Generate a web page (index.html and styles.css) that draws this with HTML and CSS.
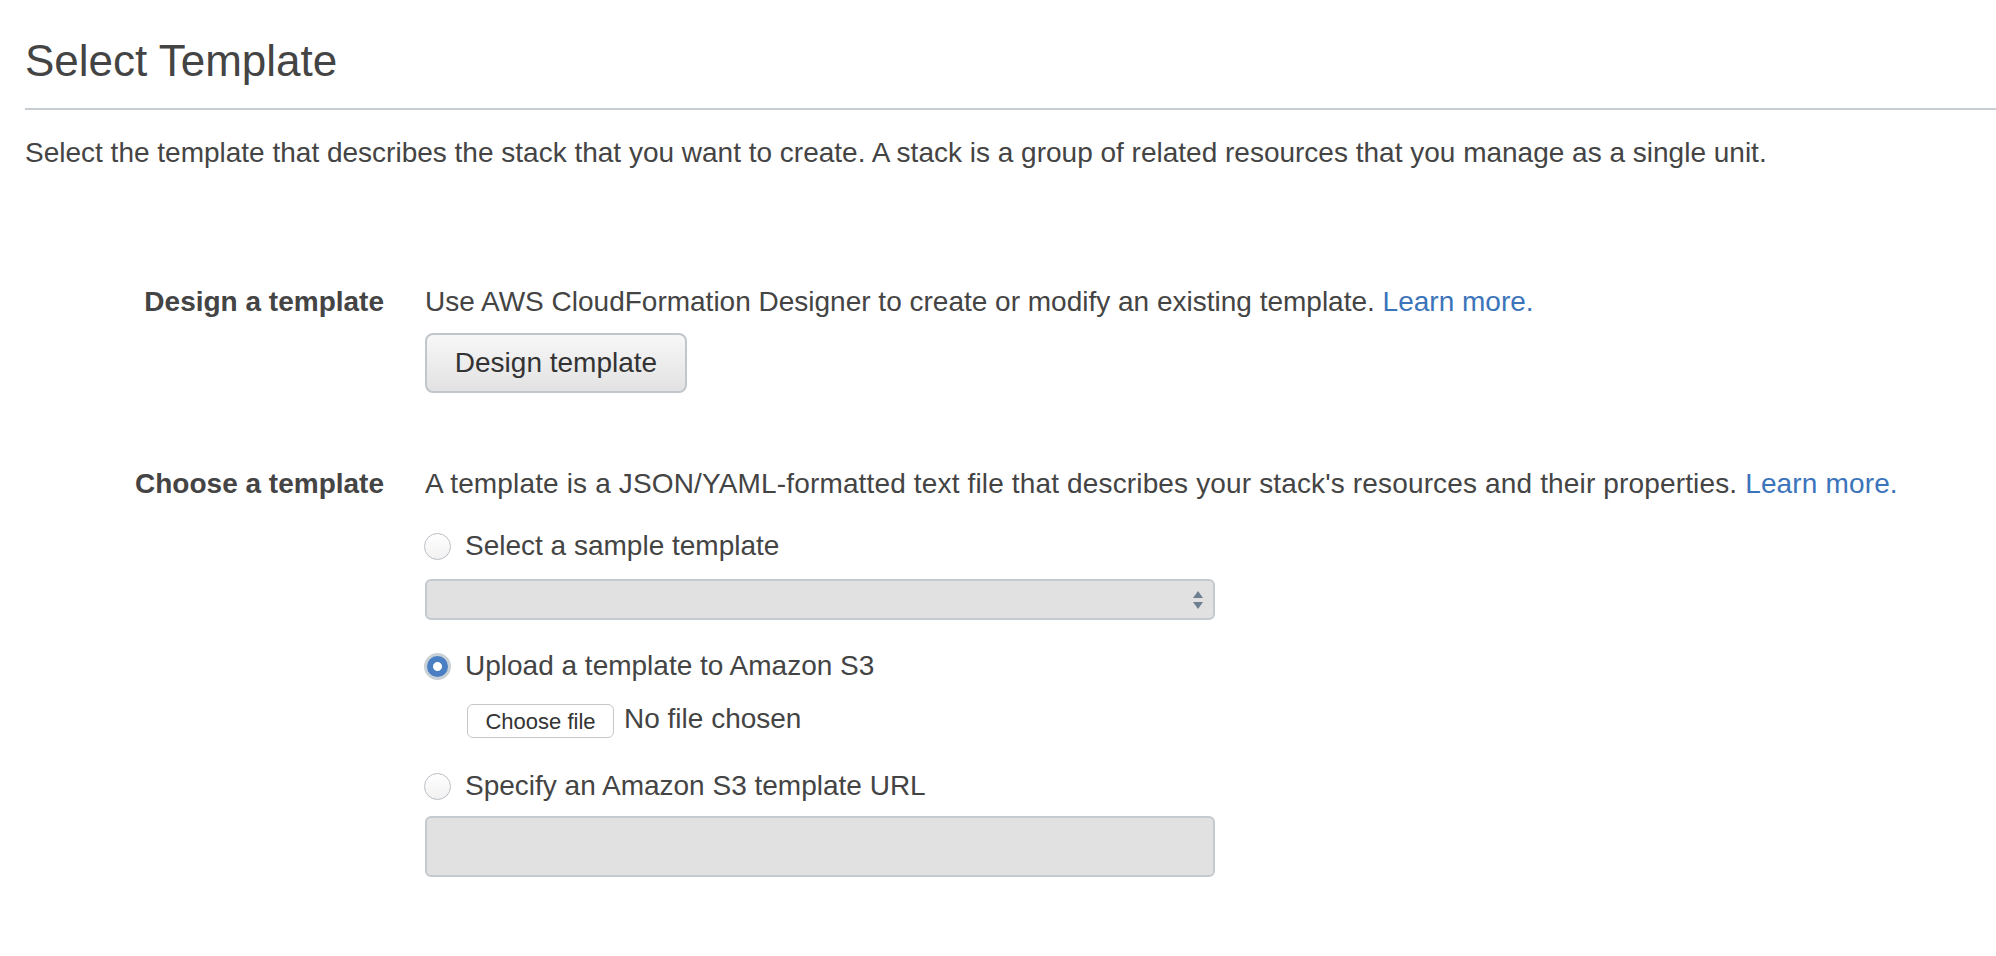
FILE: index.html
```html
<!DOCTYPE html>
<html lang="en">
<head>
<meta charset="utf-8">
<title>Select Template</title>
<link rel="stylesheet" href="styles.css">
</head>
<body>
<div class="page">
  <h1 class="title">Select Template</h1>
  <hr class="divider">
  <p class="intro">Select the template that describes the stack that you want to create. A stack is a group of related resources that you manage as a single unit.</p>

  <div class="form">
    <div class="label label-design">Design a template</div>
    <div class="field">
      <div class="desc">Use AWS CloudFormation Designer to create or modify an existing template. <a class="link" href="#">Learn more.</a></div>
      <button class="btn" type="button">Design template</button>
    </div>

    <div class="label label-choose">Choose a template</div>
    <div class="field field-choose">
      <div class="desc desc-wide">A template is a JSON/YAML-formatted text file that describes your stack's resources and their properties. <a class="link" href="#">Learn more.</a></div>

      <div class="radio-row radio-first"><span class="radio"></span><span class="radio-text">Select a sample template</span></div>
      <div class="select"><span class="arrows"><span class="arr-up"></span><span class="arr-down"></span></span></div>

      <div class="radio-row radio-second"><span class="radio checked"></span><span class="radio-text">Upload a template to Amazon S3</span></div>
      <div class="file-row"><span class="file-btn">Choose file</span><span class="file-name">No file chosen</span></div>

      <div class="radio-row radio-third"><span class="radio"></span><span class="radio-text">Specify an Amazon S3 template URL</span></div>
      <div class="text-input"></div>
    </div>
  </div>
</div>
</body>
</html>
```

FILE: styles.css
```css
html, body {
  margin: 0;
  padding: 0;
  background: #ffffff;
}

body {
  font-family: "Liberation Sans", Arial, Helvetica, sans-serif;
  color: #444444;
  font-size: 28px;
  line-height: 36px;
}

.page {
  padding: 0 0 0 25px;
}

.title {
  margin: 35px 0 21px 0;
  font-size: 44px;
  line-height: 52px;
  font-weight: normal;
  color: #444444;
}

.divider {
  margin: 0;
  border: 0;
  height: 2px;
  background: #c8cdd2;
}

.intro {
  margin: 25px 0 0 0;
}

.form {
  display: grid;
  grid-template-columns: 359px 1fr;
  column-gap: 41px;
  margin-top: 113px;
}

.label {
  text-align: right;
  font-weight: bold;
}

.label-choose {
  margin-top: 73px;
}

.field {
  display: flex;
  flex-direction: column;
  align-items: flex-start;
}

.field-choose {
  margin-top: 73px;
}

.desc-wide {
  letter-spacing: 0.15px;
}

.link {
  color: #3b74ba;
  text-decoration: none;
}

.btn {
  margin-top: 13px;
  width: 262px;
  height: 60px;
  border: 2px solid #c0c6cb;
  border-radius: 8px;
  background: linear-gradient(#f7f7f7 0%, #eeeeee 45%, #e2e2e2 100%);
  font-family: inherit;
  font-size: 28px;
  color: #333333;
  padding: 0;
}

.radio-row {
  display: flex;
  align-items: center;
  height: 36px;
}

.radio-first { margin-top: 26px; }
.radio-second { margin-top: 28px; }
.radio-third { margin-top: 30px; }

.radio {
  box-sizing: border-box;
  width: 27px;
  height: 27px;
  border-radius: 50%;
  border: 1.5px solid #b9bfc5;
  background: linear-gradient(#ffffff, #f1f1f1);
  margin-right: 14px;
  margin-left: -1px;
  flex: none;
}

.radio.checked {
  border: 3px solid #c9d0d6;
  background: radial-gradient(circle, #ffffff 0, #ffffff 4px, #4a7fc3 5px);
}

.select {
  box-sizing: border-box;
  margin-top: 15px;
  width: 790px;
  height: 41px;
  border: 2px solid #c4cad0;
  border-radius: 6px;
  background: #e1e1e1;
  display: flex;
  justify-content: flex-end;
  align-items: center;
  padding-right: 10px;
}

.arrows {
  display: flex;
  flex-direction: column;
  gap: 4px;
}

.arr-up {
  width: 0;
  height: 0;
  border-left: 5px solid transparent;
  border-right: 5px solid transparent;
  border-bottom: 7px solid #6f7f92;
}

.arr-down {
  width: 0;
  height: 0;
  border-left: 5px solid transparent;
  border-right: 5px solid transparent;
  border-top: 7px solid #6f7f92;
}

.file-row {
  display: flex;
  align-items: flex-start;
  margin-top: 20px;
  margin-left: 42px;
}

.file-btn {
  box-sizing: border-box;
  width: 147px;
  height: 34px;
  border: 1px solid #c6c6c6;
  border-radius: 6px;
  background: #ffffff;
  font-size: 22px;
  line-height: 30px;
  text-align: center;
  color: #333333;
  padding-top: 2px;
}

.file-name {
  margin-left: 10px;
  line-height: 30px;
}

.text-input {
  box-sizing: border-box;
  margin-top: 12px;
  width: 790px;
  height: 61px;
  border: 2px solid #c4cad0;
  border-radius: 6px;
  background: #e1e1e1;
}
```
